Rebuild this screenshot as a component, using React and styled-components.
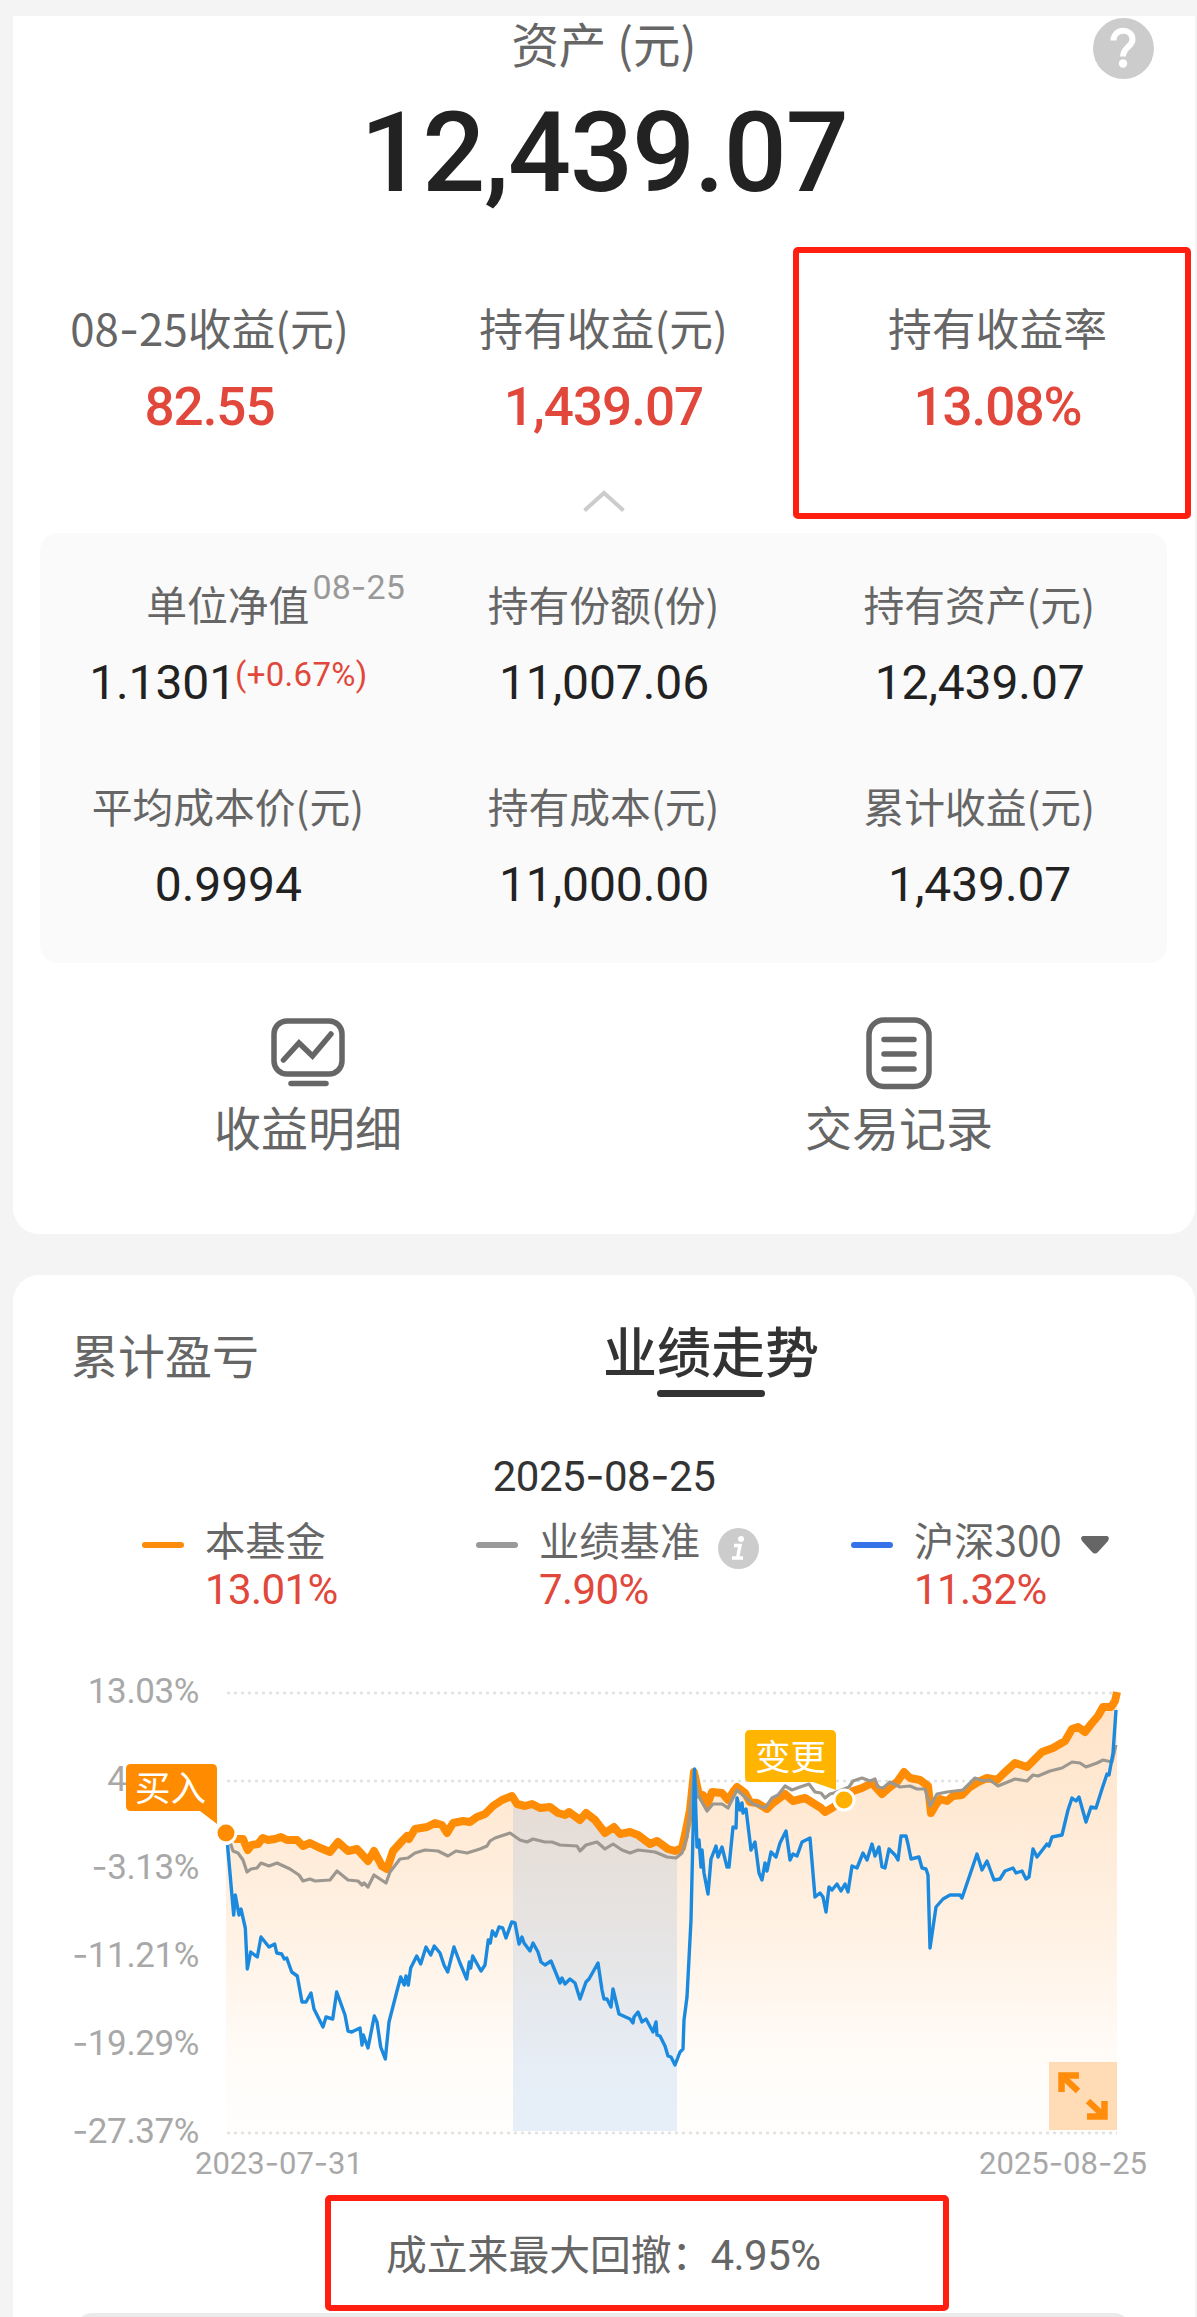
import React from 'react'
import styled, { createGlobalStyle, css } from 'styled-components'

const GlobalStyle = createGlobalStyle`
  * {
    box-sizing: border-box;
  }

  body {
    margin: 0;
    background: #f4f4f4;
  }
`;

const cjk = css`
  font-family: "Noto Sans CJK SC", "Noto Sans", sans-serif;
`;

const digits = css`
  font-family: Roboto, "Noto Sans CJK SC", sans-serif;
`;

const Page = styled.div`
  width: 1197px;
  height: 2317px;
  overflow: hidden;
  padding: 16px 2px 0 13px;
  background: #f4f4f4;
  color: #666;
  white-space: nowrap;
  ${cjk}
`;

const Hyphen = styled.span`
  font-family: Inter, sans-serif;
  line-height: 1;
`;

const AssetCard = styled.section`
  position: relative;
  display: flex;
  flex-direction: column;
  height: 1218px;
  background: #fff;
  border-radius: 0 0 26px 26px;
`;

const Title = styled.div`
  text-align: center;
  font-size: 47.5px;
  line-height: 53px;
`;

const HelpButton = styled.svg`
  position: absolute;
  top: 2px;
  right: 41px;
  width: 61px;
  height: 61px;
`;

const Amount = styled.div`
  ${digits}
  margin-top: 24px;
  text-align: center;
  font-size: 111px;
  font-weight: 500;
  line-height: 120px;
  letter-spacing: -1.1px;
  color: #222;
`;

const Stats = styled.div`
  display: grid;
  grid-template-columns: repeat(3, 1fr);
  margin-top: 83px;
`;

const Stat = styled.div`
  position: relative;
  display: flex;
  flex-direction: column;
  align-items: center;
  gap: 21px;
  padding-right: 1px;
`;

const StatLabel = styled.div`
  height: 60px;
  font-size: 43.8px;
  line-height: 62px;

  &::first-letter {
    letter-spacing: 0;
  }
`;

const StatValue = styled.div`
  ${digits}
  height: 59px;
  font-size: 53px;
  font-weight: 500;
  line-height: 61px;
  letter-spacing: -1px;
  color: #e1483b;
`;

const Highlight = styled.div`
  position: absolute;
  top: -49px;
  left: -8px;
  width: 398px;
  height: 272px;
  border: 6px solid #ff1e10;
  border-radius: 5px;
`;

const Chevron = styled.svg`
  align-self: center;
  width: 42px;
  height: 22px;
  margin-top: 54px;
`;

const Panel = styled.div`
  display: grid;
  grid-template-columns: repeat(3, 1fr);
  align-content: start;
  row-gap: 73px;
  height: 430px;
  margin: 21px 28px 0 27px;
  padding-top: 46px;
  background: #fafafa;
  border-radius: 18px;
`;

const Cell = styled.div`
  display: flex;
  flex-direction: column;
  align-items: center;
  gap: 29px;
`;

const CellLabel = styled.div`
  position: relative;
  font-size: 40.8px;
  line-height: 50px;
`;

const CellValue = styled.div`
  ${digits}
  display: flex;
  padding-left: 1px;
  font-size: 48px;
  line-height: 50px;
  letter-spacing: -0.1px;
  color: #222;
`;

// date hung on the upper right corner of a label
const LabelDate = styled.span`
  ${digits}
  position: absolute;
  left: 100%;
  top: -17px;
  margin-left: 3px;
  font-size: 34px;
  letter-spacing: 0.1px;
  color: #999;
`;

const Change = styled.span`
  margin-left: -1px;
  font-size: 33px;
  line-height: 34px;
  letter-spacing: 0.3px;
  color: #e1483b;
`;

const Actions = styled.div`
  display: grid;
  grid-template-columns: 1fr 1fr;
  margin-top: 52px;
`;

const Action = styled.div`
  display: flex;
  flex-direction: column;
  align-items: center;
  gap: 5px;
  padding-right: 1px;
  font-size: 47px;
  line-height: 60px;

  svg {
    width: 76px;
    height: 76px;
  }
`;

const TrendCard = styled.section`
  height: 1042px;
  margin-top: 41px;
  background: #fff;
  border-radius: 26px 26px 0 0;
`;

const Tabs = styled.div`
  display: flex;
  gap: 344px;
  height: 122px;
  padding: 47px 0 0 58px;
`;

const Tab = styled.div`
  font-size: 47px;
  line-height: 63px;

  ${props => props.$active && css`
    font-size: 54px;
    font-weight: 500;
    line-height: 56px;
    color: #333;

    &::after {
      content: "";
      display: block;
      width: 108px;
      height: 7px;
      margin: 12px auto 0;
      background: #333;
      border-radius: 4px;
    }
  `}
`;

const CurrentDate = styled.div`
  ${digits}
  height: 50px;
  margin-top: 55px;
  text-align: center;
  font-size: 42px;
  line-height: 50px;
  letter-spacing: -0.5px;
  color: #333;
`;

const Legend = styled.div`
  display: grid;
  grid-template-columns: 334px 375px auto;
  margin-top: 14px;
  padding-left: 129px;
`;

const LegendItem = styled.div`
  display: grid;
  grid-template-columns: 42px auto;
  grid-template-rows: 44px 44px;
  column-gap: 21px;
  row-gap: 7px;
  line-height: 46px;
`;

const Dash = styled.i`
  align-self: center;
  height: 6px;
  margin-top: 14px;
  border-radius: 3px;
  background: ${props => props.$color};
`;

const LegendName = styled.div`
  display: flex;
  align-items: center;
  height: 45px;
  font-size: 40.3px;
`;

const LegendValue = styled.div`
  ${digits}
  grid-column: 2;
  font-size: 42px;
  letter-spacing: -0.6px;
  color: #e1483b;
`;

const InfoIcon = styled.svg`
  width: 41px;
  height: 41px;
  margin: 20px 0 0 18px;
`;

const Caret = styled.svg`
  width: 28px;
  height: 18px;
  margin: 13px 0 0 19px;
`;

const Plot = styled.div`
  display: flex;
  height: 528px;
  margin-top: 35px;
`;

const Axis = styled.div`
  ${digits}
  width: 187px;
  padding: 2px 1px 0 0;
  text-align: right;
  font-size: 35px;
  line-height: 88px;
  letter-spacing: -0.4px;
  color: #a8a8a8;
`;

const Tick = styled.div`
  height: 88px;
`;

const Chart = styled.svg`
  width: 960px;
  height: 480px;
  margin-top: 14px;
  overflow: visible;

  text {
    ${cjk}
    font-size: 35.5px;
    fill: #fff;
  }
`;

const Dates = styled.div`
  ${digits}
  display: flex;
  justify-content: space-between;
  height: 40px;
  margin-top: -31px;
  padding: 0 48px 0 182px;
  font-size: 31px;
  line-height: 42px;
  letter-spacing: 0;
  color: #a8a8a8;
`;

const Drawdown = styled.div`
  width: 624px;
  height: 116px;
  margin: 12px 0 0 312px;
  padding-left: 55px;
  border: 6px solid #ff1e10;
  border-radius: 5px;
  font-size: 40.8px;
  line-height: 103px;

  span {
    ${digits}
    margin-left: -2px;
    font-size: 42px;
    letter-spacing: -0.5px;
  }
`;

const BottomBar = styled.div`
  height: 20px;
  margin: 2px 65px 0 63px;
  background: #ebebeb;
  border-radius: 16px 16px 0 0;
`;

const stats = [
  { label: '08-25收益(元)', value: '82.55' },
  { label: '持有收益(元)', value: '1,439.07' },
  { label: '持有收益率', value: '13.08%', marked: true },
];

const holdings = [
  { label: '单位净值', date: '08-25', value: '1.1301', change: '(+0.67%)' },
  { label: '持有份额(份)', value: '11,007.06' },
  { label: '持有资产(元)', value: '12,439.07' },
  { label: '平均成本价(元)', value: '0.9994' },
  { label: '持有成本(元)', value: '11,000.00' },
  { label: '累计收益(元)', value: '1,439.07' },
];

const axis = ['13.03%', '4.95%', '-3.13%', '-11.21%', '-19.29%', '-27.37%'];

const fund = '26,173 36,179 43,179 47.7,190 51.7,185 58,184 62.7,178 68,180 75,179 81,177 87,180 97,180 103,186 110,183 118,187 130,192 138,182 148,191 157,189 168,201 174,191 182,206 187,209 193,191 203,180 207,176 209,179 215,169 227,167 235,163 242,165 247,173 253,163 263,161 270,162 277,157 285,154 293,146 302,140 312,136 317,144 325,146 332,144 340,148 350,147 358,153 365,155 369,152 380,160 386,153 395,160 405,173 414,167 420,174 430,172 438,175 450,184 457,181 468,189 475,191 482,188 486,170 490,150 494,112 499,135 503,135 507,145 512,132 522,133 528,140 533,132 537,127 545,133 550,142 557,143 567,149 573,143 585,134 593,141 605,138 613,143 621,148 625,152 632,148 644,140 653,131 662,128 672,123 682,134 690,127 697,122 704,112 710,118 720,120 728,126 731,153 735,146 740,139 747,141 753,136 762,135 770,127 778,122 787,118 797,120 803,114 815,103 827,107 842,92 853,88 865,81 872,69 878,67 885,72 892,63 898,56 903,47 911,47 915,41 917,32';

const benchmark = '28,176 30,182 33,191 38,193 43,200 47,212 51,209 57,208 61,203 69,206 77,203 90,209 99,215 103,221 110,219 115,221 130,220 137,211 148,220 158,221 162,225 164,223 168,227 174,215 186,223 190,212 200,199 208,198 215,193 225,190 238,191 248,196 256,191 267,193 280,189 287,186 290,181 295,178 310,173 320,180 327,182 333,179 345,182 352,182 360,185 377,186 380,191 386,185 397,182 405,189 413,184 422,190 430,193 438,190 455,192 467,197 476,198 482,193 487,177 494,113 498,135 507,151 513,144 522,144 528,148 537,130 545,137 553,144 565,148 572,138 578,135 585,126 592,130 600,127 609,124 615,132 621,133 625,138 630,134 634,133 649,127 653,121 662,118 670,121 675,119 678,127 683,128 690,122 700,127 710,126 717,129 725,129 730,146 737,134 747,132 763,130 775,118 783,121 790,120 798,126 815,119 827,121 833,115 838,116 850,111 862,108 872,102 880,103 886,107 897,103 903,100 912,102 916,85';

const index = '27.5,185 33.7,255 35.3,235 39,255 41,249 45.3,268 47.3,309 50.7,292 57.3,297 61,277 69,287 74.7,284 76.7,293 81.7,294 84.3,299 86.7,298 91.7,312 97.3,316 102,342 106,342 111,333 114,349 123,367 126,357 132.7,359 136.7,332 145,355 148,371 151.7,372 160,368 162,385 163.3,375 168,388 174.3,356 177,362 180.7,387 185.3,399 189,362 196.7,332 200.7,317 204.3,325 206,316 208.3,325 210.7,308 216.7,296 220.7,304 226,287 230.7,295 234.3,286 240,293 244,305 247.7,312 254,287 260,303 266.7,319 269.3,302 270.7,308 272.7,296 281,311 285,305 288.3,280 290.3,283 292.3,271 295.7,276 299,267 302.7,268 306,278 311.7,262 315,263 319,284 322,277 324,283 330,291 333,283 338,292 341,302 345,305 351,301 360,323 362,318 365,324 370,319 375,323 380,339 386,322 389,319 398,303 402,330 404,339 407,339 411,347 413,329 419,354 430,359 433,363 434,357 438,352 442,362 446,359 453,372 456,362 457,375 460,376 465,386 468,396 471,397 475,405 480,392 483,389 484,360 487,337 491,260 494.5,109 497,187 499,180 501,207 502,190 504,213 508,234 511,199 516,186 518,197 522,187 527,207 529,207 533,167 536,168 537,138 540,150 542,143 543,153 546,149 551,190 555,182 559,213 562,220 565,203 567,211 571,192 576,197 580,183 586,171 590,200 593,194 597,196 602,182 610,178 615,237 620,233 623,237 626,252 629,227 632,230 637,224 641,231 645,224 648,232 652,206 657,208 663,193 667,200 672,184 675,196 679,187 682,207 685,208 689,189 695,195 698,200 701,176 706,176 708,184 711,199 719,197 722,208 726,209 728,215 730,288 736,247 743,239 750,235 760,235 762,238 777,194 782,210 787,201 794,220 800,219 805,211 813,208 816,213 822,211 826,219 829,217 833,189 837,197 847,184 849,186 852,177 862,175 868,150 872,138 876,141 879,137 886,162 891,147 896,148 902,129 907,114 909,115 913,93 916,50';

// sets the hyphens of a date or a negative number in the wider face
const Wide = ({ text }) => text.split('-').map((part, i) => (
  <React.Fragment key={i}>
    {i > 0 && <Hyphen>-</Hyphen>}
    {part}
  </React.Fragment>
))

const TrendChart = () => (
  <Chart viewBox="0 0 960 480">
    <defs>
      <linearGradient id="area" gradientUnits="userSpaceOnUse" x1="0" y1="33" x2="0" y2="473">
        <stop offset="0" stopColor="#ff8c1a" stopOpacity="0.25" />
        <stop offset="0.5" stopColor="#ff8c1a" stopOpacity="0.13" />
        <stop offset="0.85" stopColor="#ff8c1a" stopOpacity="0.025" />
        <stop offset="1" stopColor="#ff8c1a" stopOpacity="0.01" />
      </linearGradient>
      <clipPath id="drawdown">
        <rect x="313" y="0" width="164" height="471" />
      </clipPath>
    </defs>

    <g stroke="#e2e2e2" strokeWidth="2.4" strokeDasharray="3 4">
      <path d="M27 33H917" />
      <path d="M27 121H917" />
    </g>

    <polygon points={`26,473 ${fund} 917,473`} fill="#fff" />
    <path d="M27 473H917" stroke="#e2e2e2" strokeWidth="2.4" strokeDasharray="3 4" />
    <polygon points={`26,473 ${fund} 917,473`} fill="url(#area)" />
    <polygon points={`26,473 ${fund} 917,473`} fill="rgba(60,140,225,0.13)" clipPath="url(#drawdown)" />

    <g fill="none" strokeLinejoin="round">
      <polyline points={fund} stroke="#ff8c05" strokeWidth="8" />
      <polyline points={benchmark} stroke="#9c9890" strokeWidth="3.2" />
      <polyline points={index} stroke="#1b8ade" strokeWidth="3.4" />
    </g>

    {/* buy marker */}
    <path d="M-69 104H12Q17 104 17 109V164L0 151H-69Q-74 151-74 146V109Q-74 104-69 104Z" fill="#ff8c00" />
    <text x="-65" y="141">买入</text>
    <circle cx="26" cy="173" r="10" fill="#ff8c00" stroke="#fff" strokeWidth="3" />

    {/* change marker */}
    <path d="M550 70H631Q636 70 636 75V130L613 122H550Q545 122 545 117V75Q545 70 550 70Z" fill="#ffb500" />
    <text x="555" y="110">变更</text>
    <circle cx="644" cy="140" r="10" fill="#ffb000" stroke="#fff" strokeWidth="3" />

    {/* full screen button */}
    <rect x="849" y="402" width="68" height="68" fill="#ffdcb5" />
    <g fill="none" stroke="#ff8c0a" strokeWidth="6.5">
      <path d="M879 415.5H861.5V432" />
      <path d="M861 415L878 431" />
      <path d="M887 456.5H904.5V441" />
      <path d="M905 457L888 441" />
    </g>
  </Chart>
)

const App = () => {
  return (
    <Page>
      <GlobalStyle />
      <AssetCard>
        <Title>资产 (元)</Title>
        <HelpButton viewBox="0 0 61 61">
          <circle cx="30.5" cy="30.5" r="30.5" fill="#ccc" />
          <path d="M20.5 22.5C21 9.5 39.5 10 39.5 21.5C39.5 29 30 29 30 38.5" fill="none" stroke="#fff" strokeWidth="6" />
          <circle cx="30" cy="45.5" r="4.2" fill="#fff" />
        </HelpButton>
        <Amount>12,439.07</Amount>
        <Stats>
          {stats.map(item => (
            <Stat key={item.label}>
              <StatLabel><Wide text={item.label} /></StatLabel>
              <StatValue>{item.value}</StatValue>
              {item.marked && <Highlight />}
            </Stat>
          ))}
        </Stats>
        <Chevron viewBox="0 0 42 22">
          <path d="M1.5 20.5L21 3L40.5 20.5" fill="none" stroke="#ccc" strokeWidth="4" />
        </Chevron>
        <Panel>
          {holdings.map(item => (
            <Cell key={item.label}>
              <CellLabel>
                {item.label}
                {item.date && <LabelDate><Wide text={item.date} /></LabelDate>}
              </CellLabel>
              <CellValue>
                {item.value}
                {item.change && <Change>{item.change}</Change>}
              </CellValue>
            </Cell>
          ))}
        </Panel>
        <Actions>
          <Action>
            <svg viewBox="0 0 76 76" fill="none" stroke="#666" strokeWidth="5.5" strokeLinecap="round">
              <rect x="4" y="6" width="68" height="53" rx="13" />
              <path d="M13.5 45L29 28L42.5 41L61 19" />
              <path d="M21 68.5H56" />
            </svg>
            收益明细
          </Action>
          <Action>
            <svg viewBox="0 0 76 76" fill="none" stroke="#666" strokeWidth="5.5" strokeLinecap="round">
              <rect x="8" y="5" width="60" height="66.5" rx="15" />
              <path d="M23 24.5H53M23 39H53M23 54H53" />
            </svg>
            交易记录
          </Action>
        </Actions>
      </AssetCard>

      <TrendCard>
        <Tabs>
          <Tab>累计盈亏</Tab>
          <Tab $active>业绩走势</Tab>
        </Tabs>
        <CurrentDate><Wide text="2025-08-25" /></CurrentDate>
        <Legend>
          <LegendItem>
            <Dash $color="#fb8c0c" />
            <LegendName>本基金</LegendName>
            <LegendValue>13.01%</LegendValue>
          </LegendItem>
          <LegendItem>
            <Dash $color="#999" />
            <LegendName>
              业绩基准
              <InfoIcon viewBox="0 0 41 41">
                <circle cx="20.5" cy="20.5" r="20.5" fill="#ccc" />
                <circle cx="23" cy="11" r="3" fill="#fff" />
                <path d="M16 17.5H22L19.5 30M14 30H25" fill="none" stroke="#fff" strokeWidth="3.4" />
              </InfoIcon>
            </LegendName>
            <LegendValue>7.90%</LegendValue>
          </LegendItem>
          <LegendItem>
            <Dash $color="#3673e8" />
            <LegendName>
              沪深300
              <Caret viewBox="0 0 28 18">
                <path d="M2 0H26Q29 1 27 5L17 16Q14 19 11 16L1 5Q-1 1 2 0Z" fill="#666" />
              </Caret>
            </LegendName>
            <LegendValue>11.32%</LegendValue>
          </LegendItem>
        </Legend>
        <Plot>
          <Axis>
            {axis.map(tick => <Tick key={tick}><Wide text={tick} /></Tick>)}
          </Axis>
          <TrendChart />
        </Plot>
        <Dates>
          <span><Wide text="2023-07-31" /></span>
          <span><Wide text="2025-08-25" /></span>
        </Dates>
        <Drawdown>成立来最大回撤：<span>4.95%</span></Drawdown>
        <BottomBar />
      </TrendCard>
    </Page>
  )
}

export default App
